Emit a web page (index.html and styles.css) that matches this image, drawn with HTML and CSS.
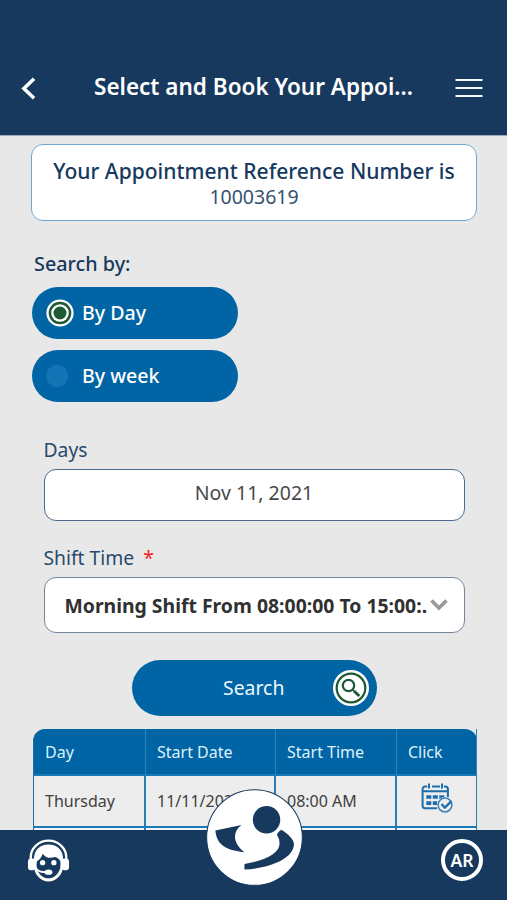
FILE: index.html
```html
<!DOCTYPE html>
<html lang="en">
<head>
<meta charset="utf-8">
<title>Select and Book Your Appointment</title>
<link rel="stylesheet" href="styles.css">
</head>
<body>
<div class="app">
  <header class="topbar">
    <svg class="back" viewBox="0 0 14 22"><path d="M12.3 1.6 2.6 11l9.7 9.4" fill="none" stroke="#fff" stroke-width="3.4"/></svg>
    <h1 class="title"><span>Select and Book Your Appoi...</span></h1>
    <svg class="menu" viewBox="0 0 28 20"><path d="M.5 2h27M.5 10h27M.5 18h27" stroke="#f4f8fc" stroke-width="2.1"/></svg>
  </header>
  <main class="content">
    <section class="reference">
      <strong class="reference-label">Your Appointment Reference Number is</strong>
      <span class="reference-number">10003619</span>
    </section>
    <h2 class="search-by">Search by:</h2>
    <div class="options">
      <div class="option"><svg class="radio-on" viewBox="0 0 28 28"><circle cx="14" cy="14" r="13.6" fill="#fff"/><circle cx="14" cy="14" r="11.3" fill="#1d5934"/><circle cx="14" cy="14" r="8.8" fill="#fff"/><circle cx="14" cy="14" r="6.5" fill="#1d5934"/></svg><span>By Day</span></div>
      <div class="option"><i class="radio-off"></i><span>By week</span></div>
    </div>
    <div class="field">
      <div class="label label-days">Days</div>
      <div class="input date">Nov 11, 2021</div>
      <div class="label label-shift">Shift Time <span class="required">*</span></div>
      <div class="input select"><span class="select-value">Morning Shift From 08:00:00 To 15:00:.</span><svg class="chevron" viewBox="0 0 18 12"><path d="M1.5 1.5 9 9l7.500-7.500" fill="none" stroke="#9a9a9a" stroke-width="3.700"/></svg></div>
    </div>
    <div class="search-button"><span>Search</span>
      <svg class="search-icon" viewBox="0 0 36 36"><circle cx="18" cy="18" r="18" fill="#fff"/><circle cx="18" cy="18" r="14.300" fill="none" stroke="#1d5934" stroke-width="2.200"/><circle cx="15.500" cy="15.500" r="5.700" fill="none" stroke="#1d5934" stroke-width="2.200"/><path d="m19.500 19.500 2 2" stroke="#1d5934" stroke-width="1.700"/><path d="m21 21 5.300 5" stroke="#1d5934" stroke-width="3"/></svg>
    </div>
    <div class="table">
      <div class="row head"><div>Day</div><div>Start Date</div><div>Start Time</div><div>Click</div></div>
      <div class="row"><div>Thursday</div><div>11/11/2021</div><div>08:00 AM</div><div class="click">
        <svg class="calendar" viewBox="0 0 32 31"><g fill="none" stroke="#1b6dab" stroke-width="2"><path d="M16 25.300H4.200a2.600 2.600 0 0 1-2.600-2.600V6a2.600 2.600 0 0 1 2.600-2.600h2M11 3.400h8M23 3.400h1.300A2.600 2.600 0 0 1 26.900 6v8M1.600 8.200h25.300M8 .5v5M21 .5v5"/></g><path d="M5.300 12.200h5v3.600h-5zM11.800 12.200h5v3.600h-5zM18.300 12.200h5v3.600h-5zM5.300 18.300h5v3.600h-5zM11.800 18.300h4.500v3.600h-4.500z" fill="#1b6dab"/><circle cx="24" cy="22" r="8" fill="#ededed"/><circle cx="24" cy="22" r="6.900" fill="none" stroke="#3b83b8" stroke-width="1.500"/><path d="m20.500 21 3.300 3.600 6.700-6.500" fill="none" stroke="#1b6dab" stroke-width="2.200"/></svg>
      </div></div>
      <div class="row next"><div></div><div></div><div></div><div></div></div>
    </div>
  </main>
  <footer class="bottombar">
    <svg class="agent" viewBox="0 0 44 44"><path d="M3.800 22v-3a18.200 17.300 0 0 1 36.400 0v3" fill="none" stroke="#fff" stroke-width="2.400"/><path d="M7 21C7 11 13 5.500 22 5.500S37 11 37 21v6c0 9-7 16.500-15 16.500S7 36 7 27z" fill="#fff"/><rect x="1" y="20" width="7.500" height="12" rx="3" fill="#fff"/><rect x="35.500" y="20" width="7.500" height="12" rx="3" fill="#fff"/><path d="M10 23c3-2 5-4.500 6-8 3 4 7.500 5.300 12.500 3.500C31 19 33 20.500 34.200 23v4C34.200 34.500 28 40.200 22 40.200S9.800 34.500 9.800 27z" fill="#16395d"/><path d="M9 29.500c1.500 3 5 4.500 11 4.500" fill="none" stroke="#fff" stroke-width="2"/><ellipse cx="22" cy="34" rx="4" ry="2.700" fill="#fff"/><circle cx="16" cy="24.200" r="2.700" fill="#fff"/><circle cx="27.500" cy="24.200" r="2.700" fill="#fff"/></svg>
    <div class="language">AR</div>
    <svg class="logo" viewBox="47 27 290 290"><circle cx="192" cy="172" r="143" fill="#fff" stroke="#16395d" stroke-width="3"/><circle cx="228" cy="119" r="41" fill="#16395d"/><path d="M75 151 153 135C126 155 126 188 162 216 122 211 79 203 75 151ZM162 251C222 242 267 220 267 190Q267 175 259 164 263 154 272 149C292 161 310 178 310 192 309 236 235 264 162 268Z" fill="#16395d"/></svg>
  </footer>
</div>
</body>
</html>
```
FILE: styles.css
```css
* { box-sizing: border-box; }
body { margin: 0; font-family: "Noto Sans", "Open Sans", sans-serif; color: #16395d; background: #e8e8e8; }
.app { height: 900px; display: flex; flex-direction: column; overflow: hidden; }
svg { display: block; flex: none; }
.topbar { height: 136px; flex: none; background: #16395d; border-bottom: 1px solid #9ca9b6; display: flex; align-items: flex-start; padding: 76px 24px 0 21px; }
.back { width: 15px; height: 23px; margin-top: 1px; }
.title { flex: 1; margin: -4px 0 0 58px; font-size: 22.5px; line-height: 30px; font-weight: 600; color: #fff; white-space: nowrap; }
.menu { width: 28px; height: 20px; margin-top: 2px; }
.content { flex: 1; min-height: 0; overflow: hidden; padding: 8px 30px 0 31px; }
.reference { height: 77px; border: 1.5px solid #72a8ce; border-radius: 12px; background: #fff; display: flex; flex-direction: column; align-items: center; padding-top: 13px; font-size: 21.050px; line-height: 26px; white-space: nowrap; }
.reference-label { font-weight: 500; }
.reference-number { font-size: 19.5px; line-height: 25px; color: #34506f; }
.search-by { margin: 30px 0 0 3px; font-size: 19.8px; line-height: 26px; font-weight: 500; }
.options { display: flex; flex-direction: column; gap: 11px; margin: 10px 0 0 1px; }
.option { width: 206px; height: 52px; border-radius: 26px; background: #0165a5; color: #fff; display: flex; align-items: center; padding-left: 14px; font-size: 19.600px; line-height: 26px; font-weight: 500; }
.radio-on { width: 28px; height: 28px; margin-right: 8px; }
.radio-off { width: 22px; height: 22px; border-radius: 50%; background: #1474b5; margin-right: 14px; }
.field { margin: 35px 12.500px 0 12.500px; }
.label { font-size: 19.3px; line-height: 26px; color: #294a6c; }
.required { color: #f02020; margin-left: 4px; }
.input { background: #fff; border: 1.5px solid #4c6b8c; border-radius: 12px; font-size: 19.5px; }
.date { height: 52px; margin-top: 6px; text-align: center; line-height: 45px; color: #484848; }
.label-shift { margin-top: 24px; }
.select { height: 56px; margin-top: 6px; border: 1px solid #71869c; display: flex; align-items: center; padding: 0 16px 0 20px; color: #303030; font-weight: 700; }
.select-value { flex: none; width: 363px; white-space: nowrap; font-size: 19.400px; }
.chevron { width: 18px; height: 12px; margin-left: 2px; }
.search-button { width: 245px; height: 56px; margin: 27px 0 0 100.500px; border-radius: 28px; background: #0165a5; color: #eaf7ff; display: flex; align-items: center; padding: 0 8px 1px 91.500px; justify-content: space-between; font-size: 19.4px; }
.search-icon { width: 36px; height: 36px; }
.table { margin: 12.500px 0 0 2px; width: 444px; font-size: 16px; }
.row { display: grid; grid-template-columns: 112px 130px 121px 80px; height: 52px; color: #404040; background: #ededed; border-left: 1px solid #1b6dab; border-bottom: 2px solid #1b79b5; }
.row > div { padding-left: 11px; line-height: 50px; border-right: 2px solid #2d7db5; }
.row > div:last-child { border-right-width: 1px; }
.row.head { height: 47px; background: #0165a5; color: #dff1fc; border-radius: 12px 12px 0 0; }
.head > div { line-height: 46px; border-right: 1px solid #2d84bc; }
.next { background: #f3f3f3; }
.row > .click { padding: 7px 0 0 24px; }
.calendar { width: 32px; height: 31px; }
.bottombar { position: relative; height: 70px; flex: none; background: #16395d; display: flex; justify-content: space-between; padding: 9px 24px 0 27px; }
.agent { width: 43px; height: 43px; }
.language { width: 42px; height: 42px; border: 4px solid #fff; border-radius: 50%; color: #fff; font-size: 17.500px; font-weight: 600; line-height: 34px; text-align: center; }
.logo { position: absolute; left: 205.500px; top: -41px; width: 97px; height: 97px; }
```
